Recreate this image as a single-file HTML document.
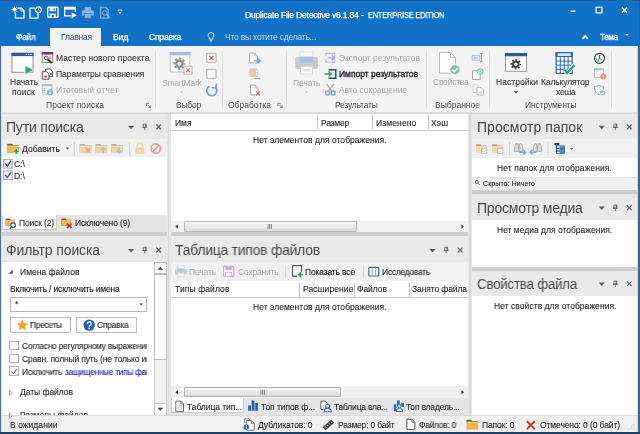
<!DOCTYPE html>
<html lang="ru"><head><meta charset="utf-8"><title>Duplicate File Detective</title>
<style>
*{box-sizing:border-box;margin:0;padding:0}
html,body{width:640px;height:434px;overflow:hidden;background:#e6e6e6;font-family:"Liberation Sans","DejaVu Sans",sans-serif;font-size:8.5px;color:#262626}
.a{position:absolute}
.t{position:absolute;white-space:nowrap;will-change:transform}
svg{position:absolute;overflow:visible}
#title{left:0;top:0;width:640px;height:46px;background:#1071c7}
#tab{left:50px;top:28px;width:51px;height:19px;background:#f3f3f3}
#ribbon{left:0;top:46px;width:640px;height:66.500px;background:#f3f3f3}
.sep{position:absolute;top:51px;width:1px;height:57px;background:#dedede}
.panel{position:absolute;background:#fff;overflow:hidden}
.ph{position:absolute;left:0;top:0;right:0;background:#e9e9e9}
.tb{position:absolute;left:0;right:0;background:#f0f0f0}
.cs{position:absolute;width:1px;background:#c4c4c4}
.hl{position:absolute;height:1px;background:#d4d4d4}
#status{left:0;top:414.800px;width:640px;height:19.200px;background:#f0f0f0;border-top:1px solid #dadada;z-index:2}
.cb{position:absolute;width:9.400px;height:9.400px;border:1px solid #adadad;background:#fff}
.btn{position:absolute;border:1px solid #bdbdbd;background:#fdfdfd;height:16px}
.sbh{position:absolute;height:11.500px;background:#f0f0f0}
.thumb{position:absolute;top:.5px;height:10.500px;background:linear-gradient(#f8f8f8,#dadada);border:1px solid #b9b9b9;border-radius:1px}
.tabs{position:absolute;background:#e4e4e4}
.atab{position:absolute;background:#fff;border:1px solid #cdcdcd;border-top:none}
</style></head><body>
<div class="a" id="title"></div>
<div class="a" style="left:0;top:0;width:640px;height:1px;background:#1b5f9f"></div>
<div class="a" id="tab"></div>
<div class="a" id="ribbon"></div>
<div class="sep" style="left:155px"></div>
<div class="sep" style="left:222px"></div>
<div class="sep" style="left:286px"></div>
<div class="sep" style="left:426px"></div>
<div class="sep" style="left:489px"></div>
<div class="sep" style="left:611px"></div>

<!-- left top panel -->
<div class="panel" style="left:0;top:113px;width:166.500px;height:119.400px">
  <div class="ph" style="height:25.800px"></div>
  <div class="tb" style="top:25.800px;height:18.700px"></div>
  <div class="tabs" style="left:0;top:101.600px;width:166.500px;height:17.800px"></div>
  <div class="atab" style="left:2.300px;top:101.600px;width:55px;height:15.400px"></div>
</div>
<!-- left bottom panel -->
<div class="panel" style="left:0;top:235.800px;width:166.500px;height:180.700px">
  <div class="ph" style="height:25.900px"></div>
  <div class="a" style="left:154px;top:25.900px;width:12.500px;height:155px;background:#f1f1f1;border-left:1px solid #c9c9c9;border-right:1px solid #c9c9c9"></div>
  <div class="a" style="left:154px;top:26.700px;width:12.500px;height:12px;background:#fff;border:1px solid #bdbdbd"></div>
  <div class="a" style="left:154px;top:38.200px;width:12.500px;height:86px;background:#fff;border:1px solid #bdbdbd"></div>
  <div class="a" style="left:154px;top:167.200px;width:12.500px;height:13px;background:#fff;border:1px solid #bdbdbd"></div>
</div>
<!-- center top -->
<div class="panel" style="left:170.800px;top:113px;width:297.200px;height:119.400px">
  <div class="hl" style="left:0;right:0;top:17.300px;background:#c9c9c9"></div>
  <div class="sbh" style="left:0;right:0;top:107.700px"><div class="thumb" style="left:13.500px;width:173px"></div></div>
</div>
<!-- center bottom -->
<div class="panel" style="left:170.800px;top:236.400px;width:297.200px;height:179.100px">
  <div class="ph" style="height:25.700px"></div>
  <div class="tb" style="top:25.700px;height:18.900px"></div>
  <div class="hl" style="left:0;right:0;top:60.600px;background:#c9c9c9"></div>
  <div class="sbh" style="left:0;right:0;top:150.100px"><div class="thumb" style="left:13.500px;width:156.500px"></div></div>
  <div class="tabs" style="left:0;top:161.600px;width:297.200px;height:17.500px"></div>
  <div class="atab" style="left:0;top:161.600px;width:73px;height:15px"></div>
</div>
<!-- right 1 -->
<div class="panel" style="left:472px;top:113px;width:164.700px;height:76.700px">
  <div class="ph" style="height:25.800px"></div>
  <div class="tb" style="top:25.800px;height:19.200px"></div>
  <div class="a" style="left:0;top:64px;width:165px;height:13px;background:#f1f1f1;border-top:1px solid #e0e0e0"></div>
</div>
<!-- right 2 -->
<div class="panel" style="left:472px;top:194.500px;width:164.700px;height:72.100px">
  <div class="ph" style="height:25.600px"></div>
</div>
<!-- right 3 -->
<div class="panel" style="left:472px;top:270.800px;width:164.700px;height:146px">
  <div class="ph" style="height:25.400px"></div>
</div>
<!-- splitters -->
<div class="a" style="left:0;top:232.300px;width:167px;height:3.400px;background:#cecece"></div>
<div class="a" style="left:171px;top:232.300px;width:297px;height:3.800px;background:#cecece"></div>
<div class="a" style="left:472px;top:189.900px;width:165px;height:4.400px;background:#cecece"></div>
<div class="a" style="left:472px;top:266.600px;width:165px;height:4px;background:#cfcfcf"></div>
<div class="a" style="left:168.200px;top:113.500px;width:1.300px;height:302px;background:#d9d9d9"></div>
<div class="a" style="left:469.400px;top:113.500px;width:1.300px;height:302px;background:#d9d9d9"></div>
<div class="a" style="left:0;top:112px;width:640px;height:1.700px;background:linear-gradient(#e2e2e2,#d6d6d6)"></div>
<div class="a" id="status"></div>
<div class="a" style="left:0;top:431.500px;width:640px;height:2.500px;background:#203c5e;z-index:5"></div>

<!-- column separators -->
<div class="cs" style="left:317px;top:115px;height:14px"></div>
<div class="cs" style="left:372px;top:115px;height:14px"></div>
<div class="cs" style="left:428px;top:115px;height:14px"></div>
<div class="cs" style="left:299px;top:282.500px;height:14px"></div>
<div class="cs" style="left:354px;top:282.500px;height:14px"></div>
<div class="cs" style="left:409px;top:282.500px;height:14px"></div>

<!-- checkboxes & controls -->
<div class="cb" style="left:9.300px;top:340.600px"></div>
<div class="cb" style="left:9.300px;top:353.500px"></div>
<div class="cb" style="left:9.300px;top:366.400px"></div>
<div class="a" style="left:9.500px;top:297px;width:137px;height:15.200px;border:1px solid #b4b4b4;background:#fff"></div>
<div class="btn" style="left:9.500px;top:316.500px;width:61px"></div>
<div class="btn" style="left:75.500px;top:316.500px;width:61.500px"></div>

<div class="a" style="left:0;top:46px;width:1px;height:388px;background:#4f7197;z-index:4"></div>
<div class="a" style="left:1px;top:46px;width:1.300px;height:386px;background:#d3e3f2;z-index:4"></div>
<div class="a" style="left:637px;top:46px;width:1px;height:386px;background:#c9d8e6;z-index:4"></div>
<div class="a" style="left:638px;top:46px;width:2px;height:388px;background:#41668a;z-index:4"></div>
<div class="a" style="left:638.500px;top:0;width:1.500px;height:46px;background:#2a5c8f;z-index:4"></div>
<div class="a" style="left:147px;top:338px;width:7px;height:40px;background:#fff;z-index:2"></div>
<svg width="640" height="434" viewBox="0 0 640 434" style="left:0;top:0;z-index:6"><g transform="translate(12 6.6)">
<path d="M5.500 1.500h4l2.500 2.500v7.500h-8.500v-5.500" fill="none" stroke="#fff" stroke-width="1.300" stroke-linejoin="round"/>
<path d="M9 1.500v3h3" fill="none" stroke="#fff" stroke-width="1"/>
<circle cx="2.6" cy="2.8" r="1.9" fill="#fff"/>
<path d="M2.6 -.3v6.2M-.5 2.8h6.2M.4.6l4.4 4.4M4.8.6l-4.4 4.4" stroke="#fff" stroke-width=".8"/>
</g>
<g transform="translate(28.5 6.6)">
<path d="M6.500 1.500h-5v10h8v-5" fill="none" stroke="#fff" stroke-width="1.300" stroke-linejoin="round"/>
<circle cx="10" cy="3.2" r="2.9" fill="#1071c7" stroke="#fff" stroke-width="1.1"/>
<path d="M10 1.6v1.8l1.3 .9" fill="none" stroke="#fff" stroke-width=".9"/>
</g>
<g transform="translate(47 6.6)">
<rect x=".7" y=".7" width="10.3" height="10" rx=".8" fill="none" stroke="#fff" stroke-width="1.4"/>
<rect x="2.6" y="1" width="6.4" height="3.6" fill="#fff"/>
<rect x="6.6" y="1.6" width="1.3" height="2.2" fill="#1071c7"/>
<rect x="2.8" y="7" width="6" height="3.6" fill="#fff"/>
<rect x="4.7" y="8.2" width="2.2" height="2.6" fill="#1071c7"/>
</g>
<g transform="translate(64 6.6)">
<path d="M7 9.3h-6.3v-8.6h10.6v4.5" fill="none" stroke="#fff" stroke-width="1.3"/>
<rect x=".7" y=".7" width="10.6" height="2.3" fill="#fff"/>
<path d="M7.6 5.6l5.2 3-5.2 3z" fill="#fff"/>
</g>
<g transform="translate(81.7 6.6)" opacity="0.5">
<rect x="3" y=".5" width="6.3" height="3.5" fill="#fff"/>
<rect x=".3" y="3.6" width="11.8" height="5.6" rx="1" fill="#fff"/>
<rect x="3" y="7" width="6.3" height="4.5" fill="#fff" stroke="#1071c7" stroke-width=".6"/>
</g>
<g transform="translate(99.6 6.6)" opacity="0.5">
<path d="M1 .7h5l2.5 2.5v8.3h-7.5z" fill="none" stroke="#fff" stroke-width="1.1"/>
<circle cx="5.3" cy="6.3" r="2.3" fill="none" stroke="#fff" stroke-width="1"/>
<path d="M7 8l3 3.2" stroke="#fff" stroke-width="1.4"/>
</g>
<g transform="translate(118 9.5)"><rect x=".2" y="0" width="3.6" height="1" fill="#fff"/><path d="M0 2.2h4l-2 2.3z" fill="#fff"/></g>
<g transform="translate(570.5 10.5)"><rect x="0" y="0" width="5" height="1.3" fill="#fff"/></g>
<g transform="translate(595.5 6.7)"><rect x=".6" y=".6" width="5.800" height="5.600" fill="none" stroke="#fff" stroke-width="1.200"/></g>
<g transform="translate(621.6 7.2)"><path d="M.3 .3l5.200 5.200M5.500 .3l-5.200 5.200" stroke="#fff" stroke-width="1.400"/></g>
<g transform="translate(582 35)"><path d="M.4 3.800l2.700-2.700 2.700 2.700" fill="none" stroke="#fff" stroke-width="1.800"/></g>
<g transform="translate(625.3 34)"><path d="M0 0h3.6l-1.8 2.1z" fill="#fff"/></g>
<g transform="translate(207.5 32)">
<path d="M3.5 .5a3 3 0 0 1 1.7 5.400v1.300h-3.400v-1.300a3 3 0 0 1 1.700-5.400z" fill="none" stroke="#fff" stroke-width=".8"/>
<path d="M2.2 8.300h2.600M2.600 9.400h1.800" stroke="#fff" stroke-width=".7"/>
</g>
<g transform="translate(11.5 52.8)">
<rect x=".5" y=".5" width="21" height="19" fill="#fff" stroke="#8c8c8c" stroke-width="1"/>
<rect x="0" y="0" width="22" height="3.3" fill="#2f5b9c"/>
<rect x="14.300" y="1.100" width="1.300" height="1.100" fill="#fff"/><rect x="16.500" y="1.100" width="1.300" height="1.100" fill="#fff"/><rect x="18.700" y="1.100" width="1.300" height="1.100" fill="#fff"/>
<path d="M13.500 12.600l9.400 4.600-9.400 4.600z" fill="#3aa876" stroke="#f1f1f1" stroke-width=".8"/>
</g>
<g transform="translate(41.7 52)">
<rect x=".5" y=".5" width="10.500" height="10" fill="#fff" stroke="#8c8c8c" stroke-width="1"/>
<rect x="0" y="0" width="11.500" height="2.600" fill="#7a2f9e"/>
<circle cx="4.600" cy="5.900" r="1.900" fill="none" stroke="#444" stroke-width="1"/>
<path d="M5.800 7.200l4.200 3.800" stroke="#333" stroke-width="2"/>
<path d="M8.700 3.200l.7 1.500 1.600.2-1.200 1.100.3 1.600-1.400-.8-1.400.8.300-1.600-1.200-1.100 1.600-.2z" fill="#f2b632"/>
</g>
<g transform="translate(41.7 68.4)">
<path d="M4 .6h4.500l2.200 2.200v5.600h-6.700z" fill="#fff" stroke="#555" stroke-width="1"/>
<path d="M.6 3.300h4.400l2.200 2.200v5.300h-6.600z" fill="#fff" stroke="#555" stroke-width="1"/>
<rect x="2.600" y="7.300" width="2.800" height="1.800" fill="#d9362b"/>
<rect x="8.300" y="4.700" width="1.900" height="1.600" fill="#d9362b"/>
</g>
<g transform="translate(41.7 84)">
<rect x=".6" y=".6" width="9.500" height="9.400" fill="#f4f7fb" stroke="#b4c6de" stroke-width="1"/>
<rect x=".1" y=".1" width="10.500" height="2.200" fill="#a9c0de"/>
<path d="M2 4.500h1.500M2 6.500h1.500M2 8.500h1.500" stroke="#a9c0de" stroke-width="1"/>
<circle cx="8.300" cy="8.300" r="3" fill="#8fb0da"/>
<rect x="7.800" y="7.600" width="1" height="2.500" fill="#fff"/><rect x="7.800" y="6.200" width="1" height="1" fill="#fff"/>
</g>
<g transform="translate(146 103)"><path d="M.4 3.200v-2.800h2.800" fill="none" stroke="#666" stroke-width=".8"/><path d="M1.800 1.800l2.600 2.600M4.600 2.400v2.200h-2.200" fill="none" stroke="#666" stroke-width=".8"/></g>
<g transform="translate(277.5 103)"><path d="M.4 3.200v-2.800h2.800" fill="none" stroke="#666" stroke-width=".8"/><path d="M1.800 1.800l2.600 2.600M4.600 2.400v2.200h-2.200" fill="none" stroke="#666" stroke-width=".8"/></g>
<g transform="translate(169.8 52)"><rect x=".5" y=".5" width="19.5" height="19.5" fill="#fbfbfb" stroke="#c2c2c2" stroke-width="1"/><rect x="0" y="0" width="20.500" height="3.300" fill="#a3bcdc"/><circle cx="9.6" cy="11.7" r="5.04" fill="none" stroke="#8e8e8e" stroke-width="2.16" stroke-dasharray="1.979 1.979" stroke-dashoffset="0.990"/><circle cx="9.6" cy="11.7" r="4.20" fill="#8e8e8e"/><circle cx="9.6" cy="11.7" r="1.98" fill="#fbfbfb"/><rect x="14.200" y="14.200" width="8" height="8" fill="#fafafa" stroke="#b4b4b4" stroke-width=".9"/><path d="M16.300 16.300l3.800 3.800M20.100 16.300l-3.800 3.800" stroke="#e05a55" stroke-width="1.100"/></g>
<g transform="translate(180 91.5)"><path d="M0 0h3l-1.500 1.700z" fill="#b0b0b0"/></g>
<g transform="translate(206.3 53)"><rect x=".5" y=".5" width="9.200" height="8.800" fill="#fafafa" stroke="#b0b0b0" stroke-width="1"/><path d="M3 2.800l4.200 4.200M7.200 2.800l-4.200 4.200" stroke="#e0524c" stroke-width="1.200"/></g>
<g transform="translate(206.3 69)"><rect x=".5" y=".5" width="9.200" height="8.800" fill="#fbfbfb" stroke="#b0b0b0" stroke-width="1"/></g>
<g transform="translate(205.8 83.6)"><path d="M9.600 3.600a5 5 0 1 1-6-.9" fill="none" stroke="#6f9dd3" stroke-width="1.600"/><path d="M10.300 0v4.200h-4.200" fill="none" stroke="#6f9dd3" stroke-width="1.400"/></g>
<g transform="translate(249 52.5)"><path d="M.5 .5h5l3 3v7h-8z" fill="#fdfdfd" stroke="#a9a9a9" stroke-width="1"/><path d="M5.500 .5v3h3" fill="none" stroke="#a9a9a9" stroke-width=".8"/><path d="M5 8.400h5.500M8.600 6l2.600 2.400-2.600 2.400" fill="none" stroke="#6f9fd4" stroke-width="1.400"/></g>
<g transform="translate(249.6 68.3)"><path d="M0 .8h7.500M0 7.800h7.500" stroke="#b5b5b5" stroke-width="1"/><rect x=".4" y="2" width="5.400" height="4.600" fill="#f3cf94" stroke="#e2b86e" stroke-width=".6"/><path d="M8 2v5" stroke="#999" stroke-width=".8" stroke-dasharray="1 1"/><path d="M5.200 10.200h5.500M6.200 9.200l-1 1 1 1M9.700 9.200l1 1-1 1" fill="none" stroke="#888" stroke-width=".7"/></g>
<g transform="translate(250 84.6)"><path d="M.5 .5h4.800l2.800 2.800v7h-7.600z" fill="#fdfdfd" stroke="#a9a9a9" stroke-width="1"/><path d="M5.300 .5v2.800h2.800" fill="none" stroke="#a9a9a9" stroke-width=".8"/><path d="M6 6.700l4 4M10 6.700l-4 4" stroke="#e2625c" stroke-width="1.200"/></g>
<g transform="translate(295.2 52)"><rect x="4.600" y="0" width="13.200" height="6" fill="#fcfcfc" stroke="#d9d9d9" stroke-width=".8"/><rect x="0" y="5" width="22.700" height="12" rx="1.500" fill="#c9c9c9"/><rect x="4.600" y="4.600" width="13.200" height="5.600" fill="#a6bddd"/><rect x="5.300" y="14.500" width="11.800" height="7.500" fill="#fcfcfc" stroke="#d4d4d4" stroke-width=".8"/><rect x="7.300" y="17" width="7.800" height="2.400" fill="#e4e4e4"/></g>
<g transform="translate(305 91.5)"><path d="M0 0h3l-1.500 1.700z" fill="#b0b0b0"/></g>
<g transform="translate(325 52.8)"><path d="M0 .7h10.500M0 9.300h10.500" stroke="#a9bfde" stroke-width="1.400"/><path d="M1 1.400v2M1 8.600v-2M9.800 1.400v7.200" stroke="#a9bfde" stroke-width="1" /><path d="M2.800 5h6.200M6.800 2.600l2.600 2.400-2.600 2.400" fill="none" stroke="#b692cf" stroke-width="1.300"/></g>
<g transform="translate(324.5 69)"><path d="M4 .7h7.300v8.600h-7.300" fill="#f4f4f4" stroke="#1f4b87" stroke-width="1.400"/><path d="M0 5h6M4 2.600l2.600 2.400-2.600 2.400" fill="none" stroke="#2aa35c" stroke-width="1.400"/></g>
<g transform="translate(325 84)"><path d="M1.800 0l5.400 7.600M8.800 0l-5.400 7.600" stroke="#b4b4b4" stroke-width="1.700"/><circle cx="2.500" cy="9" r="2" fill="none" stroke="#7fa8dc" stroke-width="1.500"/><circle cx="8.100" cy="9" r="2" fill="none" stroke="#7fa8dc" stroke-width="1.500"/></g>
<g transform="translate(439 52)"><path d="M.5 .5h11l5 5v15.600h-16z" fill="#fdfdfd" stroke="#b9b9b9" stroke-width="1"/><path d="M11.500 .5v5h5" fill="none" stroke="#b9b9b9" stroke-width="1"/><circle cx="16" cy="17.700" r="5" fill="#84c8ab" stroke="#f1f1f1" stroke-width=".8"/><path d="M13.500 17.800l1.900 1.900 3.300-3.500" fill="none" stroke="#fff" stroke-width="1.400"/></g>
<g transform="translate(471.8 53.2)"><rect x=".4" y="2.200" width="7.200" height="4.800" fill="#dfe8f5" stroke="#a9bddb" stroke-width=".8"/><rect x="2" y="4" width="3.600" height="1.200" fill="#9db4d6"/><path d="M9.500 .5v8M8 .4h3M8 8.600h3" stroke="#8c8c8c" stroke-width=".9"/></g>
<g transform="translate(472 68.4)"><path d="M5.500 2.500h-5v8.600h7.700v-4.800" fill="#fcfcfc" stroke="#a4a4a4" stroke-width="1"/><circle cx="8.200" cy="3.200" r="2.900" fill="#cfe9dd" stroke="#7ec5a5" stroke-width="1"/><path d="M8.200 1.700v1.700l1.200 .6" fill="none" stroke="#7ec5a5" stroke-width=".8"/></g>
<g transform="translate(472.5 84)"><path d="M.5 .5h3.600l2 2v6h-5.600z" fill="#f6f6f6" stroke="#c6c6c6" stroke-width=".9"/><path d="M4.500 3.500h4l2.500 2.500v5h-6.500z" fill="#fcfcfc" stroke="#b4b4b4" stroke-width=".9"/><path d="M6 8.300h3.500M6 9.800h3.500" stroke="#c6c6c6" stroke-width=".7"/></g>
<g transform="translate(505 53)"><rect x=".5" y=".5" width="21" height="17.800" fill="#fdfdfd" stroke="#9b9b9b" stroke-width="1"/><rect x="0" y="0" width="22" height="3.300" fill="#2f5b9c"/><circle cx="10.8" cy="11.2" r="4.37" fill="none" stroke="#3c3c3c" stroke-width="1.87" stroke-dasharray="1.715 1.715" stroke-dashoffset="0.858"/><circle cx="10.8" cy="11.2" r="3.64" fill="#3c3c3c"/><circle cx="10.8" cy="11.2" r="1.72" fill="#fdfdfd"/></g>
<g transform="translate(514.2 91.2)"><path d="M0 0h3.800l-1.900 2.200z" fill="#333"/></g>
<g transform="translate(555.6 52)"><rect x=".6" y=".6" width="16" height="20.800" fill="#fff" stroke="#2d63b0" stroke-width="1.200"/><rect x="0" y="0" width="17.200" height="5" fill="#2d63b0"/><rect x="2" y="1.300" width="13.200" height="2.600" fill="#e9eff8"/><path d="M4.7 5v16.400" stroke="#2d63b0" stroke-width="1"/><path d="M8.6 5v16.400" stroke="#2d63b0" stroke-width="1"/><path d="M12.5 5v16.400" stroke="#2d63b0" stroke-width="1"/><path d="M.6 9.1h16" stroke="#2d63b0" stroke-width="1"/><path d="M.6 13.2h16" stroke="#2d63b0" stroke-width="1"/><path d="M.6 17.3h16" stroke="#2d63b0" stroke-width="1"/><path d="M8.300 17.300l3.300 3.600 7.300-7.800" fill="none" stroke="#f3f3f3" stroke-width="4"/><path d="M8.300 17.300l3.300 3.600 7.300-7.800" fill="none" stroke="#2c9f66" stroke-width="2.300"/></g>
<g transform="translate(593.5 52.6)"><circle cx="6" cy="5.700" r="5" fill="#fff" stroke="#444" stroke-width="1.200"/><path d="M6 5.700v4.300a4.300 4.300 0 0 1-4.300-4.300z" fill="#7cc9a2"/><path d="M6 2.500v3.200l2.300 1.500" fill="none" stroke="#444" stroke-width=".9"/></g>
<g transform="translate(594 68)"><rect x=".5" y=".5" width="8.800" height="9" fill="#fbfbfb" stroke="#bcbcbc" stroke-width=".9"/><rect x="0" y="0" width="9.800" height="2.200" fill="#b0c4e0"/><path d="M3.300 2.500v7" stroke="#c6c6c6" stroke-width=".7"/><circle cx="9.300" cy="8.600" r="3" fill="#ee8b72"/><rect x="8.900" y="6.700" width=".9" height="2.300" fill="#fff"/><rect x="8.900" y="9.600" width=".9" height=".9" fill="#fff"/></g>
<g transform="translate(594 84.4)"><path d="M5 .6c1.500 1 3 1.300 4.400 1.300 0 4-.8 6.600-4.400 8.400-3.600-1.800-4.400-4.400-4.400-8.400 1.400 0 2.900-.3 4.400-1.300z" fill="#f7f9fc" stroke="#7fa6d9" stroke-width="1"/><circle cx="8.600" cy="8.400" r="2.900" fill="#8fd0b0" stroke="#f1f1f1" stroke-width=".6"/><path d="M7.200 8.500l1 1 1.800-1.900" fill="none" stroke="#fff" stroke-width=".9"/></g>
<g transform="translate(128 125.7)"><path d="M0 0h6.200l-3.100 3.500z" fill="#5c5c5c"/></g>
<g transform="translate(142.4 123.7)"><path d="M.9 .4h2.900v3.200h-2.900zM0 3.700h4.700M2.350 3.900v2.500" fill="none" stroke="#5c5c5c" stroke-width=".85"/><path d="M3.300 .4v3.200" stroke="#5c5c5c" stroke-width="1"/></g>
<g transform="translate(156.1 124.30000000000001)"><path d="M.2 .2l4.800 4.800M5 .2l-4.800 4.800" stroke="#5c5c5c" stroke-width="1.150"/></g>
<g transform="translate(128 248.9)"><path d="M0 0h6.200l-3.100 3.500z" fill="#5c5c5c"/></g>
<g transform="translate(142.4 246.9)"><path d="M.9 .4h2.900v3.200h-2.900zM0 3.700h4.700M2.350 3.900v2.500" fill="none" stroke="#5c5c5c" stroke-width=".85"/><path d="M3.300 .4v3.200" stroke="#5c5c5c" stroke-width="1"/></g>
<g transform="translate(156.1 247.5)"><path d="M.2 .2l4.800 4.800M5 .2l-4.800 4.800" stroke="#5c5c5c" stroke-width="1.150"/></g>
<g transform="translate(429.4 248.9)"><path d="M0 0h6.200l-3.100 3.500z" fill="#5c5c5c"/></g>
<g transform="translate(443.79999999999995 246.9)"><path d="M.9 .4h2.900v3.200h-2.900zM0 3.700h4.700M2.350 3.900v2.500" fill="none" stroke="#5c5c5c" stroke-width=".85"/><path d="M3.300 .4v3.200" stroke="#5c5c5c" stroke-width="1"/></g>
<g transform="translate(457.5 247.5)"><path d="M.2 .2l4.800 4.800M5 .2l-4.800 4.800" stroke="#5c5c5c" stroke-width="1.150"/></g>
<g transform="translate(598.6 125.7)"><path d="M0 0h6.200l-3.100 3.500z" fill="#5c5c5c"/></g>
<g transform="translate(613.0 123.7)"><path d="M.9 .4h2.900v3.200h-2.900zM0 3.700h4.700M2.350 3.900v2.500" fill="none" stroke="#5c5c5c" stroke-width=".85"/><path d="M3.300 .4v3.200" stroke="#5c5c5c" stroke-width="1"/></g>
<g transform="translate(626.7 124.30000000000001)"><path d="M.2 .2l4.800 4.800M5 .2l-4.800 4.800" stroke="#5c5c5c" stroke-width="1.150"/></g>
<g transform="translate(598.6 206.60000000000002)"><path d="M0 0h6.200l-3.100 3.500z" fill="#5c5c5c"/></g>
<g transform="translate(613.0 204.60000000000002)"><path d="M.9 .4h2.900v3.200h-2.900zM0 3.700h4.700M2.350 3.900v2.500" fill="none" stroke="#5c5c5c" stroke-width=".85"/><path d="M3.300 .4v3.200" stroke="#5c5c5c" stroke-width="1"/></g>
<g transform="translate(626.7 205.20000000000002)"><path d="M.2 .2l4.800 4.800M5 .2l-4.800 4.800" stroke="#5c5c5c" stroke-width="1.150"/></g>
<g transform="translate(598.6 282.6)"><path d="M0 0h6.200l-3.100 3.500z" fill="#5c5c5c"/></g>
<g transform="translate(613.0 280.6)"><path d="M.9 .4h2.900v3.200h-2.900zM0 3.700h4.700M2.350 3.900v2.500" fill="none" stroke="#5c5c5c" stroke-width=".85"/><path d="M3.300 .4v3.200" stroke="#5c5c5c" stroke-width="1"/></g>
<g transform="translate(626.7 281.2)"><path d="M.2 .2l4.800 4.800M5 .2l-4.800 4.800" stroke="#5c5c5c" stroke-width="1.150"/></g>
<g transform="translate(7.3 142.8)"><path d="M0 1h4.8l1 1.200h5.7v7.6h-11.5z" fill="#6b5a3a"/><path d="M0 2.800h11.5v7.0h-11.5z" fill="#f0b64d"/><path d="M0 2.800h11.5v1.200h-11.5z" fill="#f7cf85"/><path d="M9 5.800v5.600M6.200 8.600h5.600" stroke="#ebebeb" stroke-width="3.200"/><path d="M9 6v5.200M6.400 8.600h5.200" stroke="#2ea65a" stroke-width="1.700"/></g>
<g transform="translate(65.8 147.5)"><path d="M0 0h3.600l-1.800 2z" fill="#555"/></g>
<g transform="translate(79.7 143)" opacity="0.45"><path d="M0 1h4.8l1 1.200h5.7v7.3h-11.5z" fill="#6b5a3a"/><path d="M0 2.800h11.5v6.7h-11.5z" fill="#f0b64d"/><path d="M0 2.800h11.5v1.200h-11.5z" fill="#f7cf85"/><path d="M6 5l4.600 4.600M10.600 5l-4.600 4.600" stroke="#d9362b" stroke-width="1.300"/></g>
<g transform="translate(95.6 143)" opacity="0.45"><path d="M0 1h4.8l1 1.200h5.7v7.3h-11.5z" fill="#6b5a3a"/><path d="M0 2.800h11.5v6.7h-11.5z" fill="#f0b64d"/><path d="M0 2.800h11.5v1.200h-11.5z" fill="#f7cf85"/><path d="M7.800 10.500v-5.500M5.500 7.300l2.300-2.400 2.300 2.400" fill="none" stroke="#3f7fd0" stroke-width="1.300"/></g>
<g transform="translate(111.3 143)" opacity="0.45"><path d="M0 1h4.8l1 1.200h5.7v7.3h-11.5z" fill="#6b5a3a"/><path d="M0 2.800h11.5v6.7h-11.5z" fill="#f0b64d"/><path d="M0 2.800h11.5v1.200h-11.5z" fill="#f7cf85"/><path d="M7.800 4.500v5.500M5.500 7.800l2.300 2.400 2.300-2.400" fill="none" stroke="#3f7fd0" stroke-width="1.300"/></g>
<g transform="translate(135 142.5)" opacity="0.45"><path d="M2.300 5v-2a2.600 2.600 0 0 1 5.200 0v2" fill="none" stroke="#f0b64d" stroke-width="1.400"/><rect x=".3" y="5" width="9.200" height="6.500" rx=".8" fill="#f0b64d"/><rect x="4.300" y="7" width="1.200" height="2.600" fill="#fff"/></g>
<g transform="translate(150.3 143)" opacity="0.5"><circle cx="5.500" cy="5.500" r="4.700" fill="none" stroke="#d9362b" stroke-width="1.500"/><path d="M2.300 8.700l6.400-6.400" stroke="#d9362b" stroke-width="1.500"/></g>
<g transform="translate(3.1 158.9)"><rect x=".5" y=".5" width="8.7" height="8.7" fill="#f7f7f7" stroke="#a9a9a9" stroke-width="1"/><path d="M2 4.5l2.3 2.6 3.7-5.4" fill="none" stroke="#2341c4" stroke-width="1.300"/></g>
<g transform="translate(3.1 170.4)"><rect x=".5" y=".5" width="8.7" height="8.7" fill="#f7f7f7" stroke="#a9a9a9" stroke-width="1"/><path d="M2 4.5l2.3 2.6 3.7-5.4" fill="none" stroke="#2341c4" stroke-width="1.300"/></g>
<g transform="translate(5.5 217.5)"><path d="M0 1h4.0l1 1.200h4.5v5.8h-9.5z" fill="#6b5a3a"/><path d="M0 2.800h9.5v5.2h-9.5z" fill="#f0b64d"/><path d="M0 2.800h9.5v1.200h-9.5z" fill="#f7cf85"/><circle cx="7.600" cy="7.600" r="2.300" fill="#fff" stroke="#2d63b0" stroke-width="1.200"/><path d="M5.900 9.500l-1.700 1.800" stroke="#2d63b0" stroke-width="1.300"/></g>
<g transform="translate(61.5 217.5)"><path d="M0 1h4.0l1 1.200h4.5v5.8h-9.5z" fill="#6b5a3a"/><path d="M0 2.800h9.5v5.2h-9.5z" fill="#f0b64d"/><path d="M0 2.800h9.5v1.200h-9.5z" fill="#f7cf85"/><path d="M5.500 6l4.600 4.600M10.100 6l-4.600 4.600" stroke="#d0271d" stroke-width="1.500"/></g>
<g transform="translate(175 266)" opacity="0.85"><rect x="2.600" y="0" width="6.800" height="3.200" fill="#fcfcfc" stroke="#d0d0d0" stroke-width=".7"/><rect x="0" y="2.800" width="12" height="5.800" rx="1" fill="#c6c6c6"/><rect x="2.600" y="2.600" width="6.800" height="2.600" fill="#a9bfde"/><rect x="2.800" y="7" width="6.400" height="3.800" fill="#fcfcfc" stroke="#cfcfcf" stroke-width=".7"/></g>
<g transform="translate(223 265.8)" opacity="0.85"><rect x=".6" y=".6" width="10.300" height="10" rx=".8" fill="#faf6fc" stroke="#c0a3d6" stroke-width="1.200"/><rect x="2.600" y=".8" width="6.200" height="3.400" fill="#c0a3d6"/><rect x="2.600" y="6.500" width="6.200" height="4" fill="#fff" stroke="#c0a3d6" stroke-width=".8"/></g>
<g transform="translate(292 265.2)"><path d="M.6 .6h8.800v6.500M5 10.900h-4.400v-10.300" fill="#fff" stroke="#3f3f3f" stroke-width="1.100"/><rect x=".6" y=".6" width="8.800" height="10.300" fill="#fff" stroke="none"/><path d="M.6 .6h8.800v6M5.200 10.900h-4.600v-10.300" fill="none" stroke="#4a4a4a" stroke-width=".95"/><path d="M8.300 6.800v5.200M5.700 9.400h5.200" stroke="#2a9d58" stroke-width="1.700"/></g>
<g transform="translate(368.3 266.8)"><rect x=".6" y=".6" width="9.800" height="8.600" rx=".8" fill="#fbfcfe" stroke="#4a6a92" stroke-width="1.200"/><path d="M3.900 1v8M7.200 1v8" stroke="#8aa4c6" stroke-width=".9"/></g>
<g transform="translate(285 265)"><rect x="0" y="0" width="1" height="13" fill="#d6d6d6"/></g>
<g transform="translate(363 265)"><rect x="0" y="0" width="1" height="13" fill="#d6d6d6"/></g>
<g transform="translate(74 142.5)"><rect x="0" y="0" width="1" height="13" fill="#d6d6d6"/></g>
<g transform="translate(129 142.5)"><rect x="0" y="0" width="1" height="13" fill="#d6d6d6"/></g>
<g transform="translate(509 142.5)"><rect x="0" y="0" width="1" height="13" fill="#d6d6d6"/></g>
<g transform="translate(547.5 142.5)"><rect x="0" y="0" width="1" height="13" fill="#d6d6d6"/></g>
<g transform="translate(175.3 400.6)"><path d="M.5 .5h5l2.700 2.700v7.800h-7.700z" fill="#fff" stroke="#5a5a5a" stroke-width=".9"/><path d="M5.500 .5v2.700h2.700" fill="none" stroke="#5a5a5a" stroke-width=".7"/><path d="M2 4.800h4.600M2 6.600h4.600M2 8.400h4.600" stroke="#a0a0a0" stroke-width=".6"/></g>
<g transform="translate(248.2 400.4)"><rect x="0" y="5" width="2.700" height="5.400" fill="#1f5fae"/><rect x="3.500" y="0" width="2.700" height="10.400" fill="#1f5fae"/><rect x="7" y="2.600" width="2.700" height="7.800" fill="#1f5fae"/></g>
<g transform="translate(320.4 400.7)"><path d="M.5 .5h4.500l2 2v4M3 8.800h-2.500v-8.300" fill="#fff" stroke="#555" stroke-width=".9"/><circle cx="7.300" cy="5.600" r="2" fill="#fff" stroke="#2d63b0" stroke-width="1.100"/><path d="M3.600 11c.2-2.400 1.800-3.300 3.700-3.300s3.500 .9 3.700 3.300z" fill="#fff" stroke="#2d63b0" stroke-width="1.100"/></g>
<g transform="translate(393.8 400.4)"><rect x="0" y="4" width="2.600" height="6.800" fill="#2d63b0"/><rect x="3.300" y="0" width="2.600" height="6" fill="#2d63b0"/><rect x="7.500" y="2.600" width="2.600" height="4" fill="#2d63b0"/><circle cx="5.600" cy="5.800" r="1.700" fill="#fff" stroke="#2d63b0" stroke-width="1"/><path d="M2.400 11c.2-2.200 1.500-3 3.200-3s3 .8 3.200 3z" fill="#fff" stroke="#2d63b0" stroke-width="1"/></g>
<g transform="translate(244 418.4)"><path d="M.5 4.500v-4h4.300l2 2" fill="none" stroke="#7a7a7a" stroke-width=".9"/><path d="M2.600 2h4.600l3 3v6.800h-7.600z" fill="#fff" stroke="#6a6a6a" stroke-width="1"/><path d="M7.200 2v3h3" fill="none" stroke="#6a6a6a" stroke-width=".8"/><circle cx="2.300" cy="8.600" r="3.100" fill="#1f5fae" stroke="#f0f0f0" stroke-width=".6"/><rect x="1.800" y="8.100" width="1" height="2.200" fill="#fff"/><rect x="1.800" y="6.600" width="1" height="1" fill="#fff"/></g>
<g transform="translate(322.5 419.8) scale(1.15)"><path d="M0 6.400l7.600-6.400 2.600 2.600-7.600 6.400z" fill="#4a4a4a"/><path d="M2.300 5.900l.9 .9M4 4.500l.9 .9M5.700 3.100l.9 .9M7.400 1.700l.9 .9" stroke="#f0f0f0" stroke-width=".7"/></g>
<g transform="translate(406.3 418.6)"><path d="M.6 .6h5l3 3v7.200h-8z" fill="#fff" stroke="#555" stroke-width="1"/><path d="M5.600 .6v3h3" fill="none" stroke="#555" stroke-width=".8"/></g>
<g transform="translate(466.5 419.4)"><path d="M0 .4h4.600l1 1.200h6v2h-11.600z" fill="#6b5a3a"/><rect x="0" y="2.400" width="11.700" height="7.800" fill="#efb450"/><rect x="0" y="2.400" width="11.700" height="1.200" fill="#f6cd84"/></g>
<g transform="translate(526 420.3)"><path d="M.8 .8l8 8M8.800 .8l-8 8" stroke="#cf3526" stroke-width="2"/></g>
<g transform="translate(628.5 424)"><path d="M4.600 0h1v1h-1zM2.300 2.300h1v1h-1zM4.600 2.300h1v1h-1zM0 4.600h1v1h-1zM2.300 4.600h1v1h-1zM4.600 4.600h1v1h-1z" fill="#bdbdbd"/></g>
<g transform="translate(476 143.3)" opacity="0.45"><path d="M0 1h4.4l1 1.200h5.1v6.8h-10.5z" fill="#6b5a3a"/><path d="M0 2.800h10.5v6.2h-10.5z" fill="#f0b64d"/><path d="M0 2.800h10.5v1.200h-10.5z" fill="#f7cf85"/><rect x="5.500" y="5.300" width="5.500" height="5" fill="#fff" stroke="#777" stroke-width=".8"/><path d="M6.600 7.800l1.200 1.200 2-2.300" fill="none" stroke="#2a9d58" stroke-width=".9"/></g>
<g transform="translate(492 143.3)" opacity="0.45"><path d="M0 1h4.4l1 1.200h5.1v6.8h-10.5z" fill="#6b5a3a"/><path d="M0 2.800h10.5v6.2h-10.5z" fill="#f0b64d"/><path d="M0 2.800h10.5v1.200h-10.5z" fill="#f7cf85"/><rect x="5.500" y="5.300" width="5.500" height="5" fill="#fff" stroke="#777" stroke-width=".8"/></g>
<g transform="translate(513.8 142.9)"><g transform="translate(0 0)"><path d="M2 .8h1.900l.9 2.700v5h-4v-3.500zM5.900 .8h1.900l1.200 4.200v3.500h-4v-5z" fill="#dcdcdc" stroke="#a6a6a6" stroke-width=".9" stroke-linejoin="round"/><rect x="4.100" y="3.200" width="1.600" height="2" fill="#a6a6a6"/></g><path d="M5.500 9.300h6.200M9.500 7l2.400 2.300-2.400 2.300" fill="none" stroke="#6a9ad6" stroke-width="1.100"/></g>
<g transform="translate(530 142.9)"><g transform="translate(2.5 0)"><path d="M2 .8h1.900l.9 2.700v5h-4v-3.500zM5.900 .8h1.900l1.200 4.200v3.500h-4v-5z" fill="#dcdcdc" stroke="#a6a6a6" stroke-width=".9" stroke-linejoin="round"/><rect x="4.100" y="3.200" width="1.600" height="2" fill="#a6a6a6"/></g><path d="M6.500 9.300h-6.200M2.500 7l-2.400 2.300 2.400 2.300" fill="none" stroke="#6a9ad6" stroke-width="1.100"/></g>
<g transform="translate(553.8 143)"><rect x=".6" y="0" width="5" height="2" fill="#1f3f6e"/><path d="M2.600 2v7.600" stroke="#1f3f6e" stroke-width=".8"/><rect x="2.600" y="2.900" width="8.200" height="2.300" fill="#fff" stroke="#1f3f6e" stroke-width=".7"/><rect x="2.600" y="5.600" width="8.200" height="2.300" fill="#fff" stroke="#1f3f6e" stroke-width=".7"/><rect x="2.600" y="8.300" width="8.200" height="2.300" fill="#fff" stroke="#1f3f6e" stroke-width=".7"/><rect x="5.800" y="3.200" width="4.700" height="1.700" fill="#3f86d6"/><rect x="5.800" y="5.900" width="4.700" height="1.700" fill="#3f86d6"/><rect x="5.800" y="8.600" width="4.700" height="1.700" fill="#3f86d6"/></g>
<g transform="translate(570 148)"><path d="M0 0h3.400l-1.700 1.900z" fill="#555"/></g>
<g transform="translate(474.8 180)"><circle cx="2" cy="2" r="1.600" fill="none" stroke="#555" stroke-width=".8"/><path d="M3.200 3.200l1.900 1.900" stroke="#555" stroke-width="1"/></g>
<g transform="translate(16.6 319.3)"><path d="M5.700 0l1.700 3.800 4 .4-3 2.800 .9 4.100-3.600-2.200-3.600 2.200 .9-4.100-3-2.800 4-.4z" fill="#f5a52a"/></g>
<g transform="translate(83.5 319.4)"><circle cx="5.700" cy="5.700" r="5.700" fill="#1f5fae"/><path d="M3.900 4.300a1.900 1.900 0 1 1 2.700 1.700c-.7 .4-.9 .7-.9 1.500" fill="none" stroke="#fff" stroke-width="1.300"/><rect x="5" y="8.300" width="1.400" height="1.400" fill="#fff"/></g>
<g transform="translate(139.3 303.4)"><path d="M0 0h3.800l-1.900 2.100z" fill="#444"/></g>
<g transform="translate(9.5 367)"><path d="M2 4.600l2 2.200 3.200-4.600" fill="none" stroke="#333" stroke-width=".9"/></g>
<g transform="translate(8.6 269.5)"><path d="M4.200 0v4.200h-4.200z" fill="#555"/></g>
<g transform="translate(9 389.7)"><path d="M.4 .4l2.800 2.600-2.800 2.600z" fill="#fff" stroke="#777" stroke-width=".7"/></g>
<g transform="translate(9 412.7)"><path d="M.4 .4l2.800 2.600-2.800 2.600z" fill="#fff" stroke="#777" stroke-width=".7"/></g>
<g transform="translate(157.3 266.8)"><path d="M0 3l3-3 3 3z" fill="#444"/></g>
<g transform="translate(157.3 407.8)"><path d="M0 0l3 3 3-3z" fill="#444"/></g>
<g transform="translate(175.5 224.3)"><path d="M2.400 0v4.400l-2.400-2.200z" fill="#333"/></g>
<g transform="translate(461.5 224.3)"><path d="M0 0v4.400l2.400-2.200z" fill="#333"/></g>
<g transform="translate(268 224.0)"><path d="M0 0v5M1.700 0v5M3.400 0v5" stroke="#555" stroke-width=".7"/></g>
<g transform="translate(175.5 390)"><path d="M2.400 0v4.400l-2.400-2.200z" fill="#333"/></g>
<g transform="translate(461.5 390)"><path d="M0 0v4.400l2.400-2.200z" fill="#333"/></g>
<g transform="translate(261 389.7)"><path d="M0 0v5M1.700 0v5M3.400 0v5" stroke="#555" stroke-width=".7"/></g></svg>
<span class="t" style="left:244.5px;top:10.1px;font-size:8.5px;line-height:11px;color:#ffffff;letter-spacing:-0.19px;-webkit-text-stroke:0.25px #ffffff">Duplicate File Detective v6.1.84</span>
<span class="t" style="left:360.5px;top:10.1px;font-size:8.5px;line-height:11px;color:#ffffff;letter-spacing:0.16px;-webkit-text-stroke:0.25px #ffffff">-</span>
<span class="t" style="left:367.5px;top:10.1px;font-size:8.5px;line-height:11px;color:#ffffff;letter-spacing:-0.22px;transform:scaleX(0.874);transform-origin:0 50%;-webkit-text-stroke:0.25px #ffffff">ENTERPRISE EDITION</span>
<span class="t" style="left:15.5px;top:32.4px;font-size:8.5px;line-height:11px;color:#ffffff;letter-spacing:-0.22px;transform:scaleX(0.974);transform-origin:0 50%;-webkit-text-stroke:0.25px #ffffff">Файл</span>
<span class="t" style="left:60.7px;top:32.4px;font-size:8.5px;line-height:11px;color:#2b4e78;letter-spacing:-0.22px;transform:scaleX(0.990);transform-origin:0 50%">Главная</span>
<span class="t" style="left:112.5px;top:32.4px;font-size:8.5px;line-height:11px;color:#ffffff;letter-spacing:-0.13px;-webkit-text-stroke:0.25px #ffffff">Вид</span>
<span class="t" style="left:149.0px;top:32.4px;font-size:8.5px;line-height:11px;color:#ffffff;letter-spacing:-0.19px;-webkit-text-stroke:0.25px #ffffff">Справка</span>
<span class="t" style="left:224.5px;top:32.4px;font-size:8.5px;line-height:11px;color:#c4dcf4;letter-spacing:-0.22px">Что вы хотите сделать...</span>
<span class="t" style="left:600.0px;top:32.4px;font-size:8.8px;line-height:11px;color:#ffffff;letter-spacing:-0.22px;transform:scaleX(0.897);transform-origin:0 50%;-webkit-text-stroke:0.35px #ffffff">Тема</span>
<span class="t" style="left:9.5px;top:77.4px;font-size:8.5px;line-height:11px;color:#383838;letter-spacing:0.00px;-webkit-text-stroke:0.1px #383838">Начать</span>
<span class="t" style="left:12.0px;top:87.4px;font-size:8.5px;line-height:11px;color:#383838;letter-spacing:0.19px;-webkit-text-stroke:0.1px #383838">поиск</span>
<span class="t" style="left:55.5px;top:52.9px;font-size:8.5px;line-height:11px;color:#383838;letter-spacing:0.10px;-webkit-text-stroke:0.1px #383838">Мастер нового проекта</span>
<span class="t" style="left:55.5px;top:68.9px;font-size:8.5px;line-height:11px;color:#383838;letter-spacing:-0.05px;-webkit-text-stroke:0.1px #383838">Параметры сравнения</span>
<span class="t" style="left:55.5px;top:84.9px;font-size:8.5px;line-height:11px;color:#a9a9a9;letter-spacing:0.09px">Итоговый отчет</span>
<span class="t" style="left:46.0px;top:100.3px;font-size:8.5px;line-height:11px;color:#4c4c4c;letter-spacing:0.05px">Проект поиска</span>
<span class="t" style="left:162.0px;top:77.9px;font-size:8.5px;line-height:11px;color:#a9a9a9;letter-spacing:-0.22px">SmartMark</span>
<span class="t" style="left:176.0px;top:100.3px;font-size:8.5px;line-height:11px;color:#4c4c4c;letter-spacing:-0.22px">Выбор</span>
<span class="t" style="left:228.0px;top:100.3px;font-size:8.5px;line-height:11px;color:#4c4c4c;letter-spacing:0.01px">Обработка</span>
<span class="t" style="left:292.5px;top:77.9px;font-size:8.5px;line-height:11px;color:#a9a9a9;letter-spacing:-0.06px">Печать</span>
<span class="t" style="left:339.0px;top:52.9px;font-size:8.5px;line-height:11px;color:#a9a9a9;letter-spacing:-0.03px">Экспорт результатов</span>
<span class="t" style="left:339.0px;top:68.9px;font-size:8.5px;line-height:11px;color:#1e1e1e;letter-spacing:-0.02px;-webkit-text-stroke:0.32px #1e1e1e">Импорт результатов</span>
<span class="t" style="left:339.0px;top:84.9px;font-size:8.5px;line-height:11px;color:#a9a9a9;letter-spacing:-0.06px">Авто сокращение</span>
<span class="t" style="left:335.0px;top:100.3px;font-size:8.5px;line-height:11px;color:#4c4c4c;letter-spacing:-0.22px">Результаты</span>
<span class="t" style="left:432.5px;top:77.4px;font-size:8.5px;line-height:11px;color:#a9a9a9;letter-spacing:-0.22px">Свойства</span>
<span class="t" style="left:435.0px;top:100.3px;font-size:8.5px;line-height:11px;color:#4c4c4c;letter-spacing:0.01px">Выбранное</span>
<span class="t" style="left:495.5px;top:77.4px;font-size:8.5px;line-height:11px;color:#383838;letter-spacing:0.03px;-webkit-text-stroke:0.1px #383838">Настройки</span>
<span class="t" style="left:541.0px;top:77.4px;font-size:8.5px;line-height:11px;color:#383838;letter-spacing:-0.12px;-webkit-text-stroke:0.1px #383838">Калькулятор</span>
<span class="t" style="left:555.5px;top:87.4px;font-size:8.5px;line-height:11px;color:#383838;letter-spacing:-0.22px;-webkit-text-stroke:0.1px #383838">хеша</span>
<span class="t" style="left:524.5px;top:100.3px;font-size:8.5px;line-height:11px;color:#4c4c4c;letter-spacing:-0.14px">Инструменты</span>
<span class="t" style="left:5.5px;top:118.3px;font-size:14px;line-height:18px;color:#484848;letter-spacing:-0.19px">Пути поиска</span>
<span class="t" style="left:5.5px;top:241.2px;font-size:14px;line-height:18px;color:#484848;letter-spacing:-0.10px">Фильтр поиска</span>
<span class="t" style="left:174.5px;top:241.2px;font-size:14px;line-height:18px;color:#484848;letter-spacing:-0.22px;transform:scaleX(0.993);transform-origin:0 50%">Таблица типов файлов</span>
<span class="t" style="left:477.0px;top:118.3px;font-size:14px;line-height:18px;color:#484848;letter-spacing:0.05px">Просмотр папок</span>
<span class="t" style="left:477.0px;top:199.3px;font-size:14px;line-height:18px;color:#484848;letter-spacing:-0.22px">Просмотр медиа</span>
<span class="t" style="left:477.0px;top:275.3px;font-size:14px;line-height:18px;color:#484848;letter-spacing:-0.22px;transform:scaleX(0.949);transform-origin:0 50%">Свойства файла</span>
<span class="t" style="left:22.0px;top:143.9px;font-size:8.5px;line-height:11px;color:#262626;letter-spacing:0.05px;-webkit-text-stroke:0.1px #262626">Добавить</span>
<span class="t" style="left:14.0px;top:159.1px;font-size:8.5px;line-height:11px;color:#262626;letter-spacing:-0.02px;-webkit-text-stroke:0.1px #262626">C:\</span>
<span class="t" style="left:14.0px;top:170.6px;font-size:8.5px;line-height:11px;color:#262626;letter-spacing:-0.02px;-webkit-text-stroke:0.1px #262626">D:\</span>
<span class="t" style="left:18.5px;top:217.9px;font-size:8.5px;line-height:11px;color:#262626;letter-spacing:-0.15px;-webkit-text-stroke:0.1px #262626">Поиск (2)</span>
<span class="t" style="left:75.0px;top:217.9px;font-size:8.5px;line-height:11px;color:#262626;letter-spacing:-0.13px;-webkit-text-stroke:0.1px #262626">Исключено (9)</span>
<span class="t" style="left:19.5px;top:266.9px;font-size:8.5px;line-height:11px;color:#262626;letter-spacing:0.02px;-webkit-text-stroke:0.1px #262626">Имена файлов</span>
<span class="t" style="left:9.5px;top:283.9px;font-size:8.5px;line-height:11px;color:#111;letter-spacing:-0.16px;-webkit-text-stroke:0.1px #111">Включить / исключить имена</span>
<span class="t" style="left:14.5px;top:298.9px;font-size:8.5px;line-height:11px;color:#262626;letter-spacing:-0.01px;-webkit-text-stroke:0.1px #262626">*</span>
<span class="t" style="left:30.3px;top:320.2px;font-size:8.5px;line-height:11px;color:#262626;letter-spacing:-0.22px;transform:scaleX(0.978);transform-origin:0 50%;-webkit-text-stroke:0.1px #262626">Пресеты</span>
<span class="t" style="left:97.2px;top:320.2px;font-size:8.5px;line-height:11px;color:#262626;letter-spacing:-0.22px;transform:scaleX(0.990);transform-origin:0 50%;-webkit-text-stroke:0.1px #262626">Справка</span>
<span class="t" style="left:21.5px;top:340.9px;font-size:8.5px;line-height:11px;color:#262626;letter-spacing:-0.22px;transform:scaleX(0.980);transform-origin:0 50%;-webkit-text-stroke:0.1px #262626">Согласно регулярному выражению</span>
<span class="t" style="left:21.5px;top:353.8px;font-size:8.5px;line-height:11px;color:#262626;letter-spacing:-0.16px;-webkit-text-stroke:0.1px #262626">Сравн. полный путь (не только им</span>
<span class="t" style="left:21.5px;top:366.7px;font-size:8.5px;line-height:11px;color:#262626;letter-spacing:-0.22px;transform:scaleX(0.979);transform-origin:0 50%;-webkit-text-stroke:0.1px #262626">Исключить</span>
<span class="t" style="left:64.5px;top:366.7px;font-size:8.5px;line-height:11px;color:#1414cc;letter-spacing:-0.22px;transform:scaleX(0.964);transform-origin:0 50%;-webkit-text-stroke:0.1px #1414cc">защищенные типы фай</span>
<span class="t" style="left:19.5px;top:387.4px;font-size:8.5px;line-height:11px;color:#262626;letter-spacing:-0.04px;-webkit-text-stroke:0.1px #262626">Даты файлов</span>
<span class="t" style="left:19.5px;top:410.4px;font-size:8.5px;line-height:11px;color:#262626;letter-spacing:-0.03px;-webkit-text-stroke:0.1px #262626">Размеры файлов</span>
<span class="t" style="left:174.7px;top:117.7px;font-size:8.5px;line-height:11px;color:#262626;letter-spacing:-0.02px;-webkit-text-stroke:0.1px #262626">Имя</span>
<span class="t" style="left:321.0px;top:117.7px;font-size:8.5px;line-height:11px;color:#262626;letter-spacing:-0.20px;-webkit-text-stroke:0.1px #262626">Размер</span>
<span class="t" style="left:375.5px;top:117.7px;font-size:8.5px;line-height:11px;color:#262626;letter-spacing:0.13px;-webkit-text-stroke:0.1px #262626">Изменено</span>
<span class="t" style="left:430.5px;top:117.7px;font-size:8.5px;line-height:11px;color:#262626;letter-spacing:0.06px;-webkit-text-stroke:0.1px #262626">Хэш</span>
<span class="t" style="left:252.8px;top:135.4px;font-size:8.5px;line-height:11px;color:#262626;letter-spacing:0.04px;-webkit-text-stroke:0.1px #262626">Нет элементов для отображения.</span>
<span class="t" style="left:189.0px;top:266.9px;font-size:8.5px;line-height:11px;color:#a9a9a9;letter-spacing:-0.14px">Печать</span>
<span class="t" style="left:237.5px;top:266.9px;font-size:8.5px;line-height:11px;color:#a9a9a9;letter-spacing:-0.19px">Сохранить</span>
<span class="t" style="left:305.0px;top:266.9px;font-size:8.5px;line-height:11px;color:#262626;letter-spacing:-0.16px;-webkit-text-stroke:0.1px #262626">Показать все</span>
<span class="t" style="left:382.0px;top:266.9px;font-size:8.5px;line-height:11px;color:#262626;letter-spacing:-0.22px;transform:scaleX(0.986);transform-origin:0 50%;-webkit-text-stroke:0.1px #262626">Исследовать</span>
<span class="t" style="left:174.5px;top:284.2px;font-size:8.5px;line-height:11px;color:#262626;letter-spacing:0.10px;-webkit-text-stroke:0.1px #262626">Типы файлов</span>
<span class="t" style="left:302.5px;top:284.2px;font-size:8.5px;line-height:11px;color:#262626;letter-spacing:0.09px;-webkit-text-stroke:0.1px #262626">Расширение</span>
<span class="t" style="left:357.3px;top:284.2px;font-size:8.5px;line-height:11px;color:#262626;letter-spacing:-0.04px;-webkit-text-stroke:0.1px #262626">Файлов</span>
<span class="t" style="left:412.0px;top:284.2px;font-size:8.5px;line-height:11px;color:#262626;letter-spacing:-0.10px;-webkit-text-stroke:0.1px #262626">Занято файла</span>
<span class="t" style="left:252.8px;top:301.9px;font-size:8.5px;line-height:11px;color:#262626;letter-spacing:0.04px;-webkit-text-stroke:0.1px #262626">Нет элементов для отображения.</span>
<span class="t" style="left:187.0px;top:401.8px;font-size:8.5px;line-height:11px;color:#262626;letter-spacing:-0.07px;-webkit-text-stroke:0.1px #262626">Таблица тип...</span>
<span class="t" style="left:260.5px;top:401.8px;font-size:8.5px;line-height:11px;color:#262626;letter-spacing:-0.08px;-webkit-text-stroke:0.1px #262626">Топ типов ф...</span>
<span class="t" style="left:334.0px;top:401.8px;font-size:8.5px;line-height:11px;color:#262626;letter-spacing:-0.22px;transform:scaleX(0.996);transform-origin:0 50%;-webkit-text-stroke:0.1px #262626">Таблица вла...</span>
<span class="t" style="left:406.0px;top:401.8px;font-size:8.5px;line-height:11px;color:#262626;letter-spacing:-0.19px;-webkit-text-stroke:0.1px #262626">Топ владель...</span>
<span class="t" style="left:497.0px;top:162.9px;font-size:8.5px;line-height:11px;color:#262626;letter-spacing:0.09px;-webkit-text-stroke:0.1px #262626">Нет папок для отображения.</span>
<span class="t" style="left:483.3px;top:178.9px;font-size:7px;line-height:9px;color:#262626;letter-spacing:0.09px;-webkit-text-stroke:0.1px #262626">Скрыто: Ничего</span>
<span class="t" style="left:497.0px;top:224.9px;font-size:8.5px;line-height:11px;color:#262626;letter-spacing:-0.00px;-webkit-text-stroke:0.1px #262626">Нет медиа для отображения.</span>
<span class="t" style="left:493.7px;top:300.9px;font-size:8.5px;line-height:11px;color:#262626;letter-spacing:0.05px;-webkit-text-stroke:0.1px #262626">Нет свойств для отображения.</span>
<span class="t" style="left:9.5px;top:419.7px;font-size:8.5px;line-height:11px;color:#262626;letter-spacing:0.05px;-webkit-text-stroke:0.1px #262626;z-index:6">В ожидании</span>
<span class="t" style="left:257.5px;top:419.7px;font-size:8.5px;line-height:11px;color:#262626;letter-spacing:-0.07px;-webkit-text-stroke:0.1px #262626;z-index:6">Дубликатов: 0</span>
<span class="t" style="left:337.5px;top:419.7px;font-size:8.5px;line-height:11px;color:#262626;letter-spacing:-0.18px;-webkit-text-stroke:0.1px #262626;z-index:6">Размер: 0 байт</span>
<span class="t" style="left:419.0px;top:419.7px;font-size:8.5px;line-height:11px;color:#262626;letter-spacing:-0.22px;transform:scaleX(0.981);transform-origin:0 50%;-webkit-text-stroke:0.1px #262626;z-index:6">Файлов: 0</span>
<span class="t" style="left:482.0px;top:419.7px;font-size:8.5px;line-height:11px;color:#262626;letter-spacing:-0.11px;-webkit-text-stroke:0.1px #262626;z-index:6">Папок: 0</span>
<span class="t" style="left:540.0px;top:419.7px;font-size:8.5px;line-height:11px;color:#262626;letter-spacing:-0.10px;-webkit-text-stroke:0.1px #262626;z-index:6">Отмечено: 0 (0 байт)</span>
</body></html>
